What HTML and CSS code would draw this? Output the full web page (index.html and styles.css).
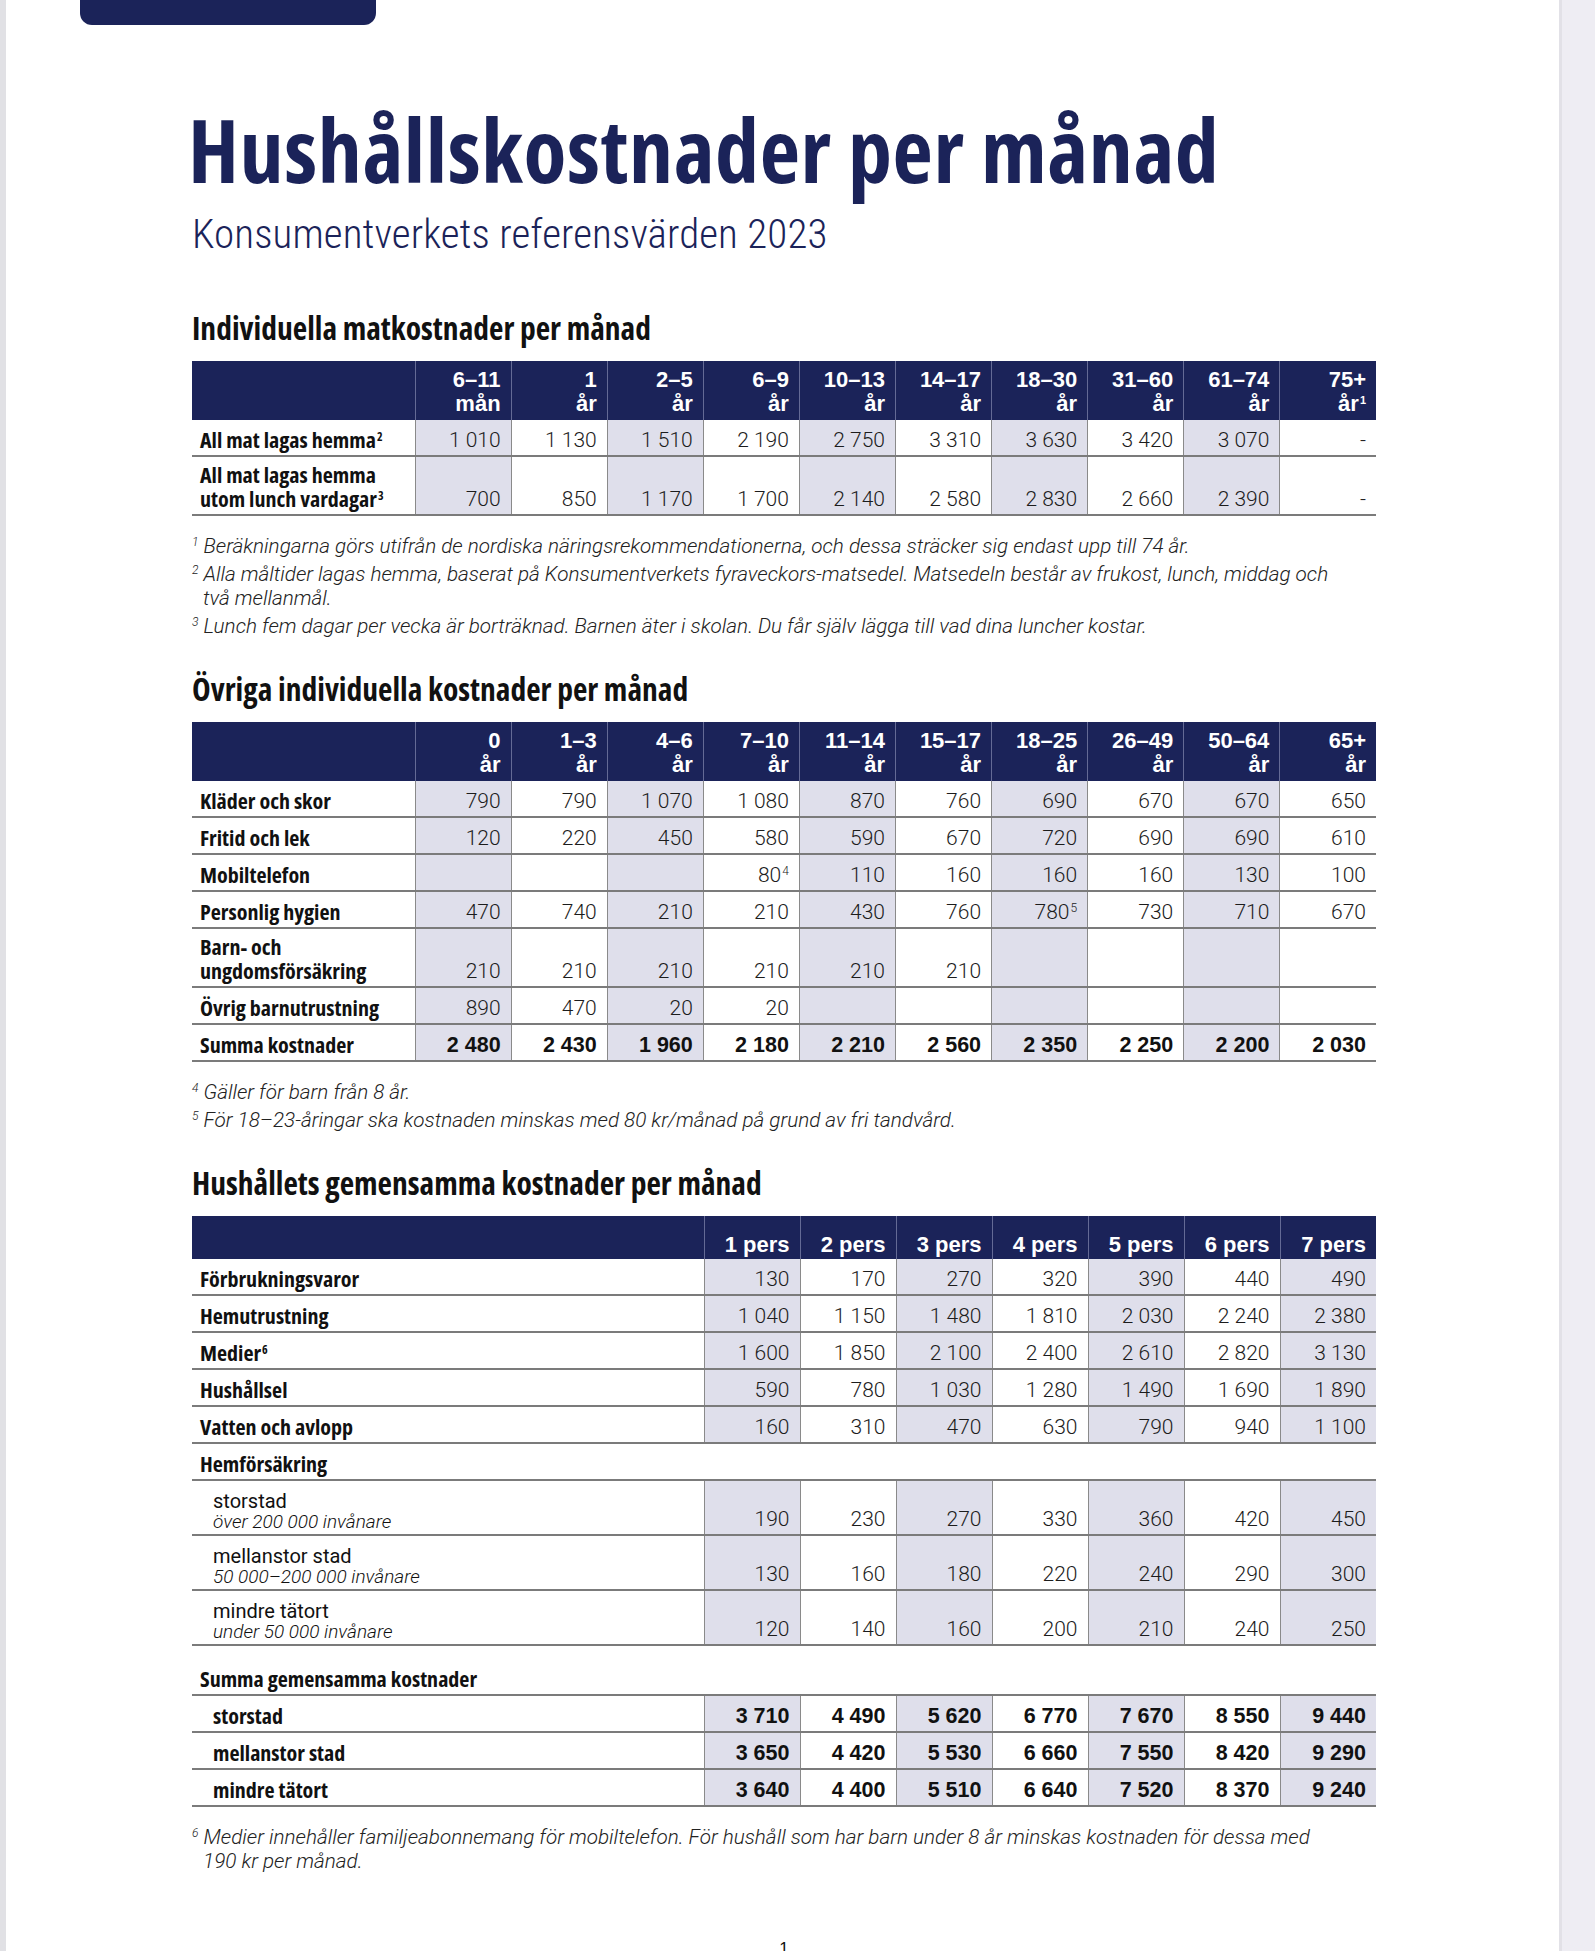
FILE: index.html
```html
<!DOCTYPE html>
<html lang="sv">
<head>
<meta charset="utf-8">
<title>Hushållskostnader per månad</title>
<link rel="stylesheet" href="styles.css">
</head>
<body>
<div class="page">
  <div class="tab"></div>
  <main class="content">
    <h1 class="title">Hushållskostnader per månad</h1>
    <p class="subtitle">Konsumentverkets referensvärden 2023</p>

    <h2 class="section-title first">Individuella matkostnader per månad</h2>
    <table class="costs">
      <colgroup>
        <col class="label-col">
        <col class="sh"><col><col class="sh"><col><col class="sh"><col><col class="sh"><col><col class="sh"><col>
      </colgroup>
      <thead>
        <tr>
          <th></th>
          <th>6–11<br>mån</th><th>1<br>år</th><th>2–5<br>år</th><th>6–9<br>år</th><th>10–13<br>år</th>
          <th>14–17<br>år</th><th>18–30<br>år</th><th>31–60<br>år</th><th>61–74<br>år</th><th>75+<br>år<sup>1</sup></th>
        </tr>
      </thead>
      <tbody>
        <tr>
          <td class="lbl">All mat lagas hemma<sup>2</sup></td>
          <td>1&nbsp;010</td><td>1&nbsp;130</td><td>1&nbsp;510</td><td>2&nbsp;190</td><td>2&nbsp;750</td>
          <td>3&nbsp;310</td><td>3&nbsp;630</td><td>3&nbsp;420</td><td>3&nbsp;070</td><td>-</td>
        </tr>
        <tr>
          <td class="lbl multi">All mat lagas hemma<br>utom lunch vardagar<sup>3</sup></td>
          <td>700</td><td>850</td><td>1&nbsp;170</td><td>1&nbsp;700</td><td>2&nbsp;140</td>
          <td>2&nbsp;580</td><td>2&nbsp;830</td><td>2&nbsp;660</td><td>2&nbsp;390</td><td>-</td>
        </tr>
      </tbody>
    </table>
    <div class="notes">
      <p><sup>1</sup> Beräkningarna görs utifrån de nordiska näringsrekommendationerna, och dessa sträcker sig endast upp till 74 år.</p>
      <p><sup>2</sup> Alla måltider lagas hemma, baserat på Konsumentverkets fyraveckors-matsedel. Matsedeln består av frukost, lunch, middag och två mellanmål.</p>
      <p><sup>3</sup> Lunch fem dagar per vecka är borträknad. Barnen äter i skolan. Du får själv lägga till vad dina luncher kostar.</p>
    </div>

    <h2 class="section-title">Övriga individuella kostnader per månad</h2>
    <table class="costs">
      <colgroup>
        <col class="label-col">
        <col class="sh"><col><col class="sh"><col><col class="sh"><col><col class="sh"><col><col class="sh"><col>
      </colgroup>
      <thead>
        <tr>
          <th></th>
          <th>0<br>år</th><th>1–3<br>år</th><th>4–6<br>år</th><th>7–10<br>år</th><th>11–14<br>år</th>
          <th>15–17<br>år</th><th>18–25<br>år</th><th>26–49<br>år</th><th>50–64<br>år</th><th>65+<br>år</th>
        </tr>
      </thead>
      <tbody>
        <tr>
          <td class="lbl">Kläder och skor</td>
          <td>790</td><td>790</td><td>1&nbsp;070</td><td>1&nbsp;080</td><td>870</td><td>760</td><td>690</td><td>670</td><td>670</td><td>650</td>
        </tr>
        <tr>
          <td class="lbl">Fritid och lek</td>
          <td>120</td><td>220</td><td>450</td><td>580</td><td>590</td><td>670</td><td>720</td><td>690</td><td>690</td><td>610</td>
        </tr>
        <tr>
          <td class="lbl">Mobiltelefon</td>
          <td></td><td></td><td></td><td>80<sup>4</sup></td><td>110</td><td>160</td><td>160</td><td>160</td><td>130</td><td>100</td>
        </tr>
        <tr>
          <td class="lbl">Personlig hygien</td>
          <td>470</td><td>740</td><td>210</td><td>210</td><td>430</td><td>760</td><td>780<sup>5</sup></td><td>730</td><td>710</td><td>670</td>
        </tr>
        <tr>
          <td class="lbl multi">Barn- och<br>ungdomsförsäkring</td>
          <td>210</td><td>210</td><td>210</td><td>210</td><td>210</td><td>210</td><td></td><td></td><td></td><td></td>
        </tr>
        <tr>
          <td class="lbl">Övrig barnutrustning</td>
          <td>890</td><td>470</td><td>20</td><td>20</td><td></td><td></td><td></td><td></td><td></td><td></td>
        </tr>
        <tr class="sum">
          <td class="lbl">Summa kostnader</td>
          <td>2&nbsp;480</td><td>2&nbsp;430</td><td>1&nbsp;960</td><td>2&nbsp;180</td><td>2&nbsp;210</td>
          <td>2&nbsp;560</td><td>2&nbsp;350</td><td>2&nbsp;250</td><td>2&nbsp;200</td><td>2&nbsp;030</td>
        </tr>
      </tbody>
    </table>
    <div class="notes">
      <p><sup>4</sup> Gäller för barn från 8 år.</p>
      <p><sup>5</sup> För 18–23-åringar ska kostnaden minskas med 80 kr/månad på grund av fri tandvård.</p>
    </div>

    <h2 class="section-title">Hushållets gemensamma kostnader per månad</h2>
    <table class="costs household">
      <colgroup>
        <col class="label-col wide">
        <col class="sh"><col><col class="sh"><col><col class="sh"><col><col class="sh">
      </colgroup>
      <thead>
        <tr>
          <th></th>
          <th>1 pers</th><th>2 pers</th><th>3 pers</th><th>4 pers</th><th>5 pers</th><th>6 pers</th><th>7 pers</th>
        </tr>
      </thead>
      <tbody>
        <tr>
          <td class="lbl">Förbrukningsvaror</td>
          <td>130</td><td>170</td><td>270</td><td>320</td><td>390</td><td>440</td><td>490</td>
        </tr>
        <tr>
          <td class="lbl">Hemutrustning</td>
          <td>1&nbsp;040</td><td>1&nbsp;150</td><td>1&nbsp;480</td><td>1&nbsp;810</td><td>2&nbsp;030</td><td>2&nbsp;240</td><td>2&nbsp;380</td>
        </tr>
        <tr>
          <td class="lbl">Medier<sup>6</sup></td>
          <td>1&nbsp;600</td><td>1&nbsp;850</td><td>2&nbsp;100</td><td>2&nbsp;400</td><td>2&nbsp;610</td><td>2&nbsp;820</td><td>3&nbsp;130</td>
        </tr>
        <tr>
          <td class="lbl">Hushållsel</td>
          <td>590</td><td>780</td><td>1&nbsp;030</td><td>1&nbsp;280</td><td>1&nbsp;490</td><td>1&nbsp;690</td><td>1&nbsp;890</td>
        </tr>
        <tr>
          <td class="lbl">Vatten och avlopp</td>
          <td>160</td><td>310</td><td>470</td><td>630</td><td>790</td><td>940</td><td>1&nbsp;100</td>
        </tr>
        <tr class="group">
          <td class="lbl" colspan="8">Hemförsäkring</td>
        </tr>
        <tr class="place-row">
          <td class="lbl sub"><span class="place">storstad</span><span class="pop">över 200 000 invånare</span></td>
          <td>190</td><td>230</td><td>270</td><td>330</td><td>360</td><td>420</td><td>450</td>
        </tr>
        <tr class="place-row">
          <td class="lbl sub"><span class="place">mellanstor stad</span><span class="pop">50 000–200 000 invånare</span></td>
          <td>130</td><td>160</td><td>180</td><td>220</td><td>240</td><td>290</td><td>300</td>
        </tr>
        <tr class="place-row">
          <td class="lbl sub"><span class="place">mindre tätort</span><span class="pop">under 50 000 invånare</span></td>
          <td>120</td><td>140</td><td>160</td><td>200</td><td>210</td><td>240</td><td>250</td>
        </tr>
        <tr class="group total-head">
          <td class="lbl" colspan="8">Summa gemensamma kostnader</td>
        </tr>
        <tr class="sum">
          <td class="lbl indent">storstad</td>
          <td>3&nbsp;710</td><td>4&nbsp;490</td><td>5&nbsp;620</td><td>6&nbsp;770</td><td>7&nbsp;670</td><td>8&nbsp;550</td><td>9&nbsp;440</td>
        </tr>
        <tr class="sum">
          <td class="lbl indent">mellanstor stad</td>
          <td>3&nbsp;650</td><td>4&nbsp;420</td><td>5&nbsp;530</td><td>6&nbsp;660</td><td>7&nbsp;550</td><td>8&nbsp;420</td><td>9&nbsp;290</td>
        </tr>
        <tr class="sum">
          <td class="lbl indent">mindre tätort</td>
          <td>3&nbsp;640</td><td>4&nbsp;400</td><td>5&nbsp;510</td><td>6&nbsp;640</td><td>7&nbsp;520</td><td>8&nbsp;370</td><td>9&nbsp;240</td>
        </tr>
      </tbody>
    </table>
    <div class="notes">
      <p><sup>6</sup> Medier innehåller familjeabonnemang för mobiltelefon. För hushåll som har barn under 8 år minskas kostnaden för dessa med 190 kr per månad.</p>
    </div>

    <div class="page-num">1</div>
  </main>
</div>
</body>
</html>
```
FILE: styles.css
```css
html, body {
  margin: 0;
  padding: 0;
  overflow: hidden;
}

body {
  background: #eeedf3;
  font-family: "Liberation Sans", Arial, sans-serif;
  color: #161616;
}

.page {
  margin-left: 6px;
  width: 1553px;
  height: 1951px;
  background: #fff;
  border-right: 3px solid #e2e1e7;
  box-shadow: -6px 0 0 #e1e1e5;
  overflow: hidden;
}

.tab {
  margin-left: 74px;
  width: 296px;
  height: 25px;
  background: #1b2359;
  border-radius: 0 0 12px 12px;
}

.content {
  display: block;
  padding-left: 186px;
  width: 1184px;
}

.title {
  margin: 81px 0 0 -4px;
  font-family: "Open Sans", "Liberation Sans", sans-serif;
  font-stretch: 75%;
  font-weight: 700;
  font-size: 88px;
  line-height: 86px;
  letter-spacing: 0.6px;
  color: #1b2359;
  white-space: nowrap;
}

.subtitle {
  margin: 22px 0 0 0;
  font-family: Roboto, "Liberation Sans", sans-serif;
  font-stretch: 75%;
  font-weight: 300;
  font-size: 41px;
  line-height: 40px;
  letter-spacing: 0.1px;
  color: #1b2359;
  white-space: nowrap;
}

.section-title {
  margin: 33px 0 15px 0;
  font-family: "Open Sans", "Liberation Sans", sans-serif;
  font-stretch: 75%;
  font-weight: 700;
  font-size: 31.5px;
  line-height: 36px;
  color: #111;
}

.section-title.first {
  margin-top: 56px;
}

/* tables */
.costs {
  width: 1184px;
  border-collapse: collapse;
  table-layout: fixed;
}

.costs col.label-col {
  width: 223px;
}

.costs col.label-col.wide {
  width: 512px;
}

.costs col.sh {
  background: #dfdfeb;
}

.costs th {
  background: #1b2359;
  color: #fff;
  font-family: "Liberation Sans", Arial, sans-serif;
  font-weight: 700;
  font-size: 22px;
  line-height: 24px;
  text-align: right;
  vertical-align: bottom;
  padding: 7px 10px 4px 8px;
  border-left: 1px solid #646a95;
}

.costs th:first-child {
  border-left: 0;
}

.household th {
  padding-top: 17px;
  padding-bottom: 2px;
}

.costs td {
  font-family: Roboto, "Liberation Sans", sans-serif;
  font-weight: 300;
  font-size: 21px;
  line-height: 22px;
  color: #1c1c1c;
  text-align: right;
  vertical-align: bottom;
  padding: 9px 10px 4px 8px;
  border-bottom: 2px solid #7b7b7b;
  border-left: 1px solid #8a8a8a;
  white-space: nowrap;
}

.costs td.lbl {
  font-family: "Open Sans", "Liberation Sans", sans-serif;
  font-stretch: 75%;
  font-weight: 700;
  font-size: 22px;
  line-height: 24px;
  color: #111;
  text-align: left;
  border-left: 0;
  padding-top: 7px;
  padding-bottom: 4px;
}

.costs td.lbl.multi {
  padding-top: 5px;
}

.costs sup {
  font-size: 12px;
  line-height: 0;
  vertical-align: 7px;
  margin-left: 1px;
}

.costs th sup {
  font-size: 11px;
}

.costs td.sub {
  padding-top: 9px;
  padding-left: 21px;
  padding-bottom: 3px;
}

.costs .place {
  display: block;
  font-family: Roboto, "Liberation Sans", sans-serif;
  font-stretch: 100%;
  font-weight: 400;
  font-size: 20px;
  line-height: 22px;
}

.costs .pop {
  display: block;
  font-family: Roboto, "Liberation Sans", sans-serif;
  font-stretch: 100%;
  font-weight: 300;
  font-style: italic;
  font-size: 19px;
  line-height: 19px;
}

.costs .group td {
  background: #fff;
}

.costs .total-head td {
  padding-top: 20px;
}

.costs .sum td {
  font-family: "Liberation Sans", Arial, sans-serif;
  font-weight: 700;
  font-size: 21.5px;
  color: #111;
}

.costs .sum td.lbl {
  font-family: "Open Sans", "Liberation Sans", sans-serif;
  font-stretch: 75%;
  font-size: 22px;
}

.costs td.indent {
  padding-left: 21px;
}

/* footnotes */
.notes {
  margin-top: 18px;
  width: 1150px;
  font-family: Roboto, "Liberation Sans", sans-serif;
  font-weight: 300;
  font-style: italic;
  font-size: 20.7px;
  line-height: 24px;
  color: #222;
}

.notes p {
  margin: 0 0 4px 0;
  padding-left: 11px;
  text-indent: -11px;
}

.notes sup {
  font-size: 12px;
  line-height: 0;
  vertical-align: 7px;
}

.page-num {
  margin-top: 66px;
  text-align: center;
  font-family: "Liberation Sans", Arial, sans-serif;
  font-size: 17px;
  line-height: 20px;
  color: #111;
}
```
